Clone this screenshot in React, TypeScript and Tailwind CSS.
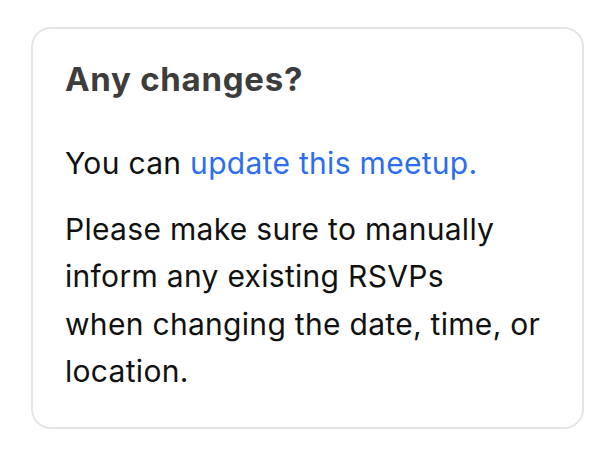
export default function App() {
  return (
    <div className="w-[610px] h-[452px] bg-white pt-[27px] pl-[31px] font-['Inter',sans-serif]">
      <div className="w-[553px] h-[402px] rounded-[20px] border-2 border-[#e5e5e5] px-[32px] pt-[30px]">
        <h2 className="text-[33px] leading-[40px] font-bold tracking-[0.022em] text-[#3d3d3d]">
          Any changes?
        </h2>

        <p className="mt-[41px] text-[30px] leading-[47.5px] tracking-[0.01em] text-[#111111]">
          You can{" "}
          <a href="#" className="text-[#2d6ef0]">
            update this meetup.
          </a>
        </p>

        <p className="mt-[18px] text-[30px] leading-[47.5px] tracking-[0.01em] text-[#111111]">
          Please make sure to manually inform any existing RSVPs
          <br />
          when changing the date, time, or location.
        </p>
      </div>
    </div>
  );
}
